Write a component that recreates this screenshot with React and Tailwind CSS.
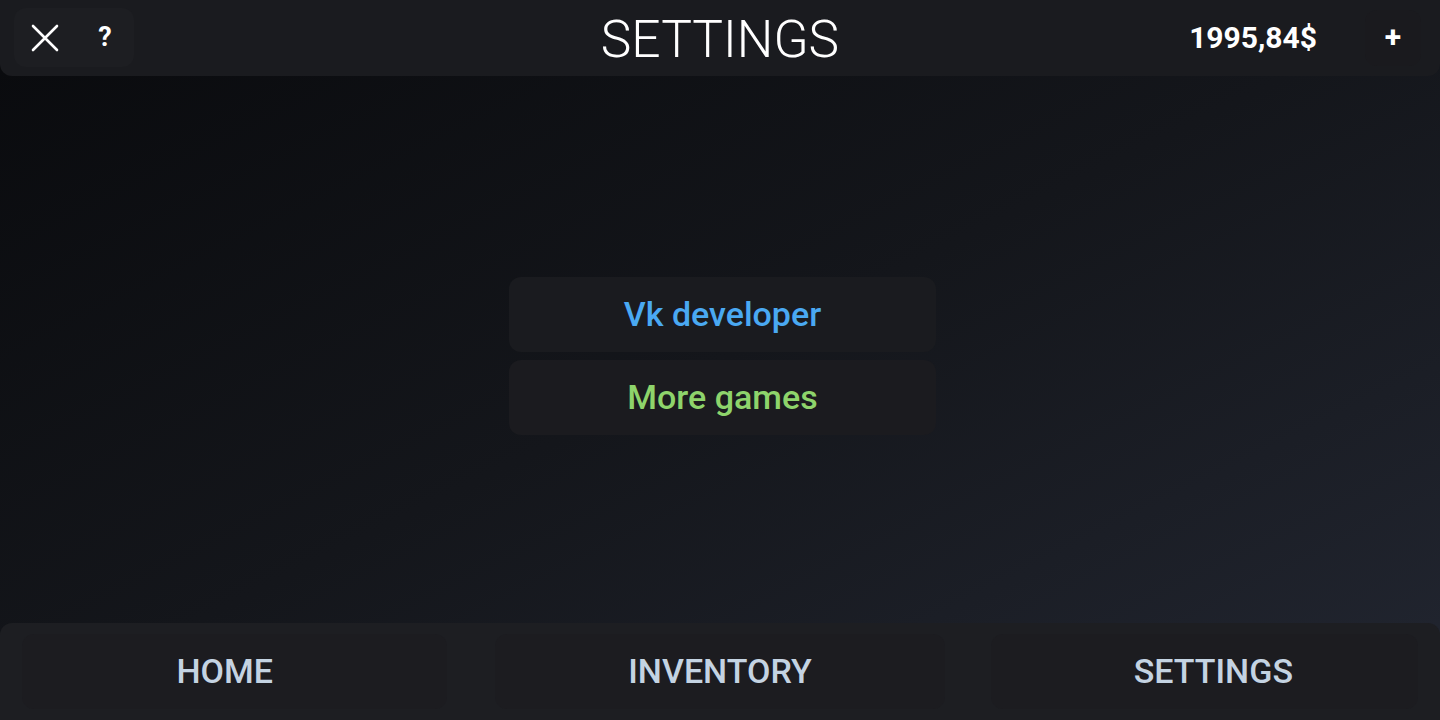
function Tab({ label, width, shift }) {
  return (
    <button
      className={`${width} ${shift} h-[75px] rounded-xl bg-[#1c1c20] flex items-center justify-center text-[34px] font-medium text-[#c4d3e2]`}
    >
      {label}
    </button>
  );
}

export default function App() {
  return (
    <div
      className="w-[1440px] h-[720px] flex flex-col overflow-hidden bg-gradient-to-br from-[#090a0d] via-[#14161b] to-[#222631] text-white"
      style={{ fontFamily: "Roboto, 'Noto Sans', sans-serif" }}
    >
      {/* top bar */}
      <header className="h-[76px] shrink-0 bg-[#1a1b1f] rounded-b-xl flex items-start justify-between px-[14px] pt-[8px] relative">
        <div className="w-[120px] h-[59px] rounded-xl bg-[#1d1e22] flex items-center">
          <button className="w-[62px] flex justify-center text-white">
            <svg width="28" height="28" viewBox="0 0 28 28" fill="none" stroke="currentColor" strokeWidth="2.6" strokeLinecap="round">
              <path d="M2 2L26 26M26 2L2 26" />
            </svg>
          </button>
          <button className="w-[58px] flex justify-center text-[27px] font-bold leading-none">?</button>
        </div>
        <h1 className="absolute left-1/2 -translate-x-1/2 top-[10px] text-[51.5px] font-light leading-none pt-[4px]">
          SETTINGS
        </h1>
        <div className="flex items-center h-[59px] mr-[5px]">
          <span className="text-[30px] font-bold mr-[48px]">1995,84$</span>
          <button className="w-[56px] h-[56px] rounded-xl bg-[#1a1a1e] flex items-center justify-center text-[30px] font-bold leading-none pb-[2px]">
            +
          </button>
        </div>
      </header>

      {/* content */}
      <main className="flex-1 flex flex-col items-center pt-[201px] gap-[8px] pl-[5px]">
        <button className="w-[427px] h-[75px] rounded-xl bg-[#1a1b1f] text-[34px] font-medium text-[#4aa9f2]">
          Vk developer
        </button>
        <button className="w-[427px] h-[75px] rounded-xl bg-[#1b1b1f] text-[34px] font-medium text-[#8ed46b]">
          More games
        </button>
      </main>

      {/* bottom tabs */}
      <nav className="h-[97px] shrink-0 bg-[#1d1e22] rounded-t-xl flex px-[22px] pt-[11px]">
        <Tab label="HOME" width="w-[426px]" shift="pr-[20px]" />
        <div className="w-[48px]" />
        <Tab label="INVENTORY" width="w-[450px]" shift="" />
        <div className="w-[46px]" />
        <Tab label="SETTINGS" width="w-[428px]" shift="pl-[18px]" />
      </nav>
    </div>
  );
}
